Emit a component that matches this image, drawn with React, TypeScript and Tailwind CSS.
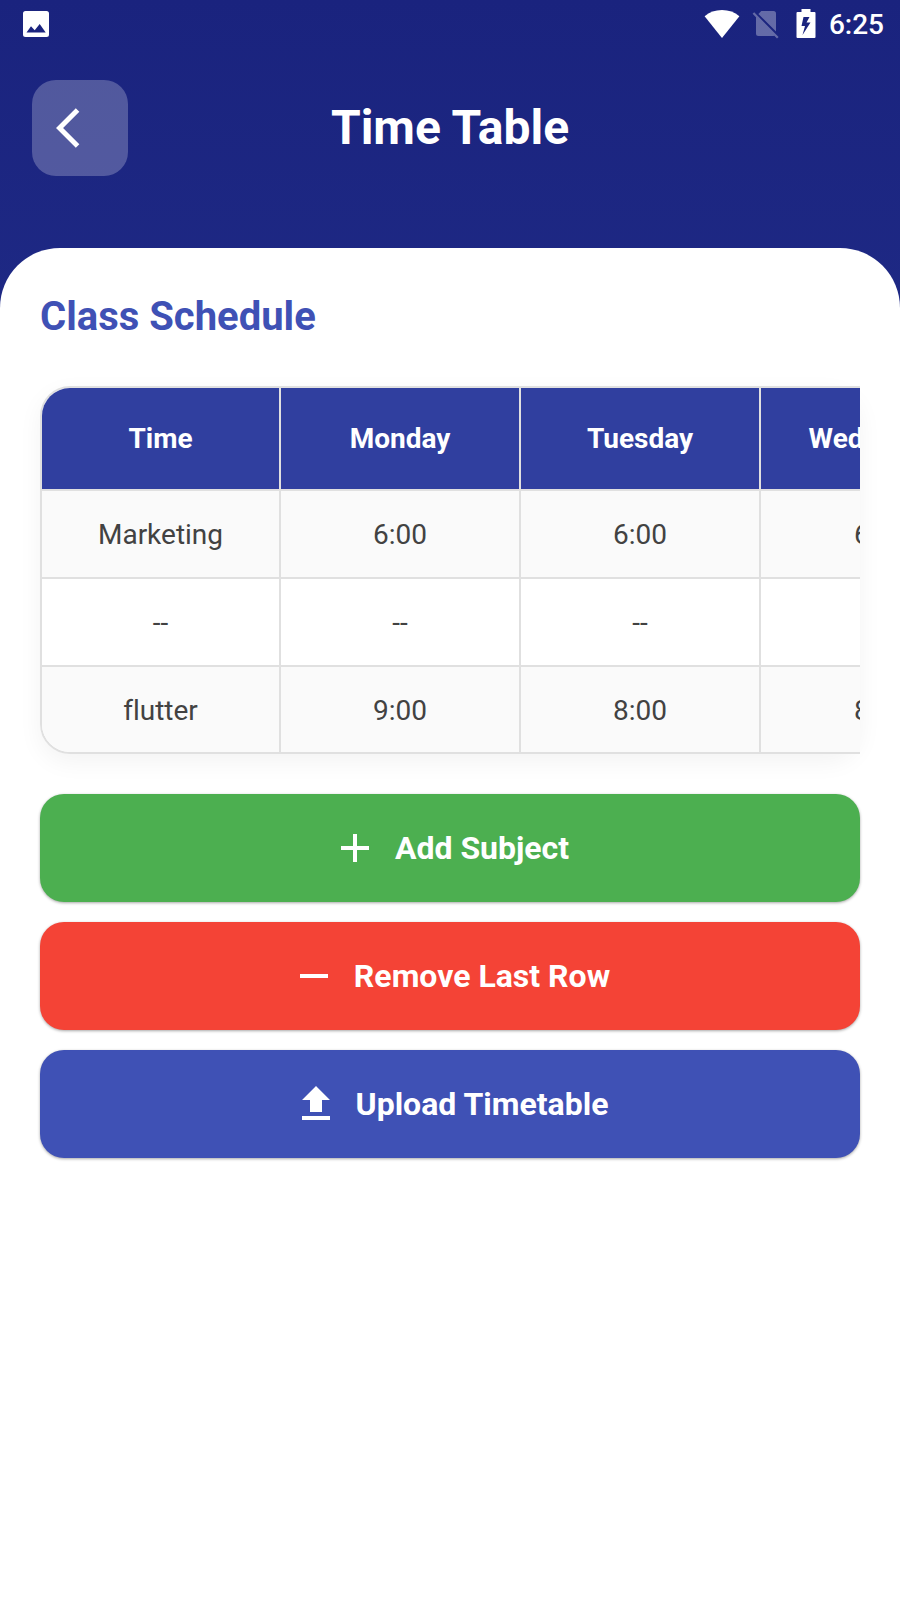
import type { ReactNode } from "react";

const days = ["Time", "Monday", "Tuesday", "Wednesday"];

const rows = [
  ["Marketing", "6:00", "6:00", "6:00"],
  ["--", "--", "--", "--"],
  ["flutter", "9:00", "8:00", "8:00"],
];

function StatusBar() {
  return (
    <div className="flex h-12 items-center justify-between pr-4 pl-[23px] text-white">
      <svg className="h-[26px] w-[26px]" viewBox="0 0 26 26" aria-hidden="true">
        <path
          fill="currentColor"
          fillRule="evenodd"
          d="M2.500 0H23.500A2.500 2.500 0 0 1 26 2.500V23.500A2.500 2.500 0 0 1 23.500 26H2.500A2.500 2.500 0 0 1 0 23.500V2.500A2.500 2.500 0 0 1 2.500 0ZM3.500 21.500H22.700L16.700 13L11.700 19.300L8 15.300Z"
        />
      </svg>
      <div className="flex items-center">
        <svg className="h-[30px] w-9" viewBox="0 0 36 30" aria-hidden="true">
          <path fill="currentColor" d="M18 29L.6 7.2C5.300 3.200 11.300 1 18 1s12.700 2.200 17.400 6.200Z" />
        </svg>
        <svg className="ml-3 h-[30px] w-7" viewBox="0 0 28 30" aria-hidden="true">
          <g fill="currentColor" opacity="0.32">
            <path d="M6.400 4.900L9.300 2H21.500A2.500 2.500 0 0 1 24 4.500V22.500Z" />
            <path d="M2.200 3.200L.6 4.800L4 8.200V24.500A2.500 2.500 0 0 0 6.500 27H21.500L22.300 26.800L25 29.600L26.600 28Z" />
          </g>
        </svg>
        <svg className="ml-4 h-[30px] w-5" viewBox="0 0 20 30" aria-hidden="true">
          <path
            fill="currentColor"
            fillRule="evenodd"
            d="M5.500 0H14.500V3H18.500A1 1 0 0 1 19.500 4V28A1 1 0 0 1 18.500 29H1.500A1 1 0 0 1 .5 28V4A1 1 0 0 1 1.500 3H5.500ZM7.500 8L5.500 17H9L6.500 26L14.500 13.500H10.500L13.500 8Z"
          />
        </svg>
        <span className="ml-[13px] pt-0.5 text-[28px] leading-8 font-medium">6:25</span>
      </div>
    </div>
  );
}

function ActionButton({ color, icon, children }: { color: string; icon: string; children: ReactNode }) {
  return (
    <button
      type="button"
      className={`flex h-27 w-full items-center justify-center gap-4 rounded-3xl text-[32px] leading-10 font-bold text-white shadow-[0_1px_3px_rgba(0,0,0,0.35)] ${color}`}
    >
      <svg className="size-12 shrink-0" viewBox="0 0 24 24" fill="currentColor" aria-hidden="true">
        <path d={icon} />
      </svg>
      {children}
    </button>
  );
}

export default function App() {
  return (
    <div className="flex min-h-screen flex-col bg-linear-to-b from-[#1a237e] to-[#303f9f] font-[Roboto,sans-serif]">
      <StatusBar />
      <header className="grid grid-cols-[96px_1fr_96px] items-center px-8 pt-8 pb-18">
        <button
          type="button"
          aria-label="Back"
          className="flex size-24 items-center justify-center rounded-3xl bg-white/24 text-white"
        >
          <svg className="size-12" viewBox="0 0 24 24" fill="currentColor" aria-hidden="true">
            <path d="M11.670 3.870L9.900 2.100 0 12l9.900 9.900 1.770-1.770L3.540 12z" />
          </svg>
        </button>
        <h1 className="text-center text-5xl font-bold text-white">Time Table</h1>
      </header>

      <main className="flex-1 rounded-t-[60px] bg-white px-10 pt-[45px] pb-10">
        <h2 className="text-[40px] leading-12 font-bold text-[#3f51b5]">Class Schedule</h2>

        <div className="mt-[45px] rounded-[30px] shadow-[0_8px_24px_rgba(0,0,0,0.05)]">
          <div className="overflow-x-auto [scrollbar-width:none]">
            <div className="w-max overflow-hidden rounded-[30px] border-2 border-[#e0e0e0]">
              <table className="table-fixed border-separate border-spacing-0 text-center text-[28px] leading-8 [font-variant-ligatures:none]">
                <thead>
                  <tr className="bg-[#303f9f] text-white">
                    {days.map((day) => (
                      <th
                        key={day}
                        scope="col"
                        className="h-[103px] w-60 border-r-2 border-b-2 border-[#e0e0e0] p-0 font-bold first:w-[239px] last:border-r-0"
                      >
                        {day}
                      </th>
                    ))}
                  </tr>
                </thead>
                <tbody className="text-[#424242]">
                  {rows.map((row, r) => (
                    <tr key={r} className="group odd:bg-[#fafafa] even:bg-white">
                      {row.map((cell, c) => (
                        <td
                          key={c}
                          className="h-22 border-r-2 border-b-2 border-[#e0e0e0] px-0 pt-0.5 pb-0 group-last:h-[85px] group-last:border-b-0 last:border-r-0"
                        >
                          {cell}
                        </td>
                      ))}
                    </tr>
                  ))}
                </tbody>
              </table>
            </div>
          </div>
        </div>

        <div className="mt-10 flex flex-col gap-5">
          <ActionButton color="bg-[#4caf50]" icon="M19 13h-6v6h-2v-6H5v-2h6V5h2v6h6v2z">
            Add Subject
          </ActionButton>
          <ActionButton color="bg-[#f44336]" icon="M19 13H5v-2h14v2z">
            Remove Last Row
          </ActionButton>
          <ActionButton color="bg-[#3f51b5]" icon="M5 20h14v-2H5v2zM5 10h4v6h6v-6h4l-7-7z">
            Upload Timetable
          </ActionButton>
        </div>
      </main>
    </div>
  );
}
